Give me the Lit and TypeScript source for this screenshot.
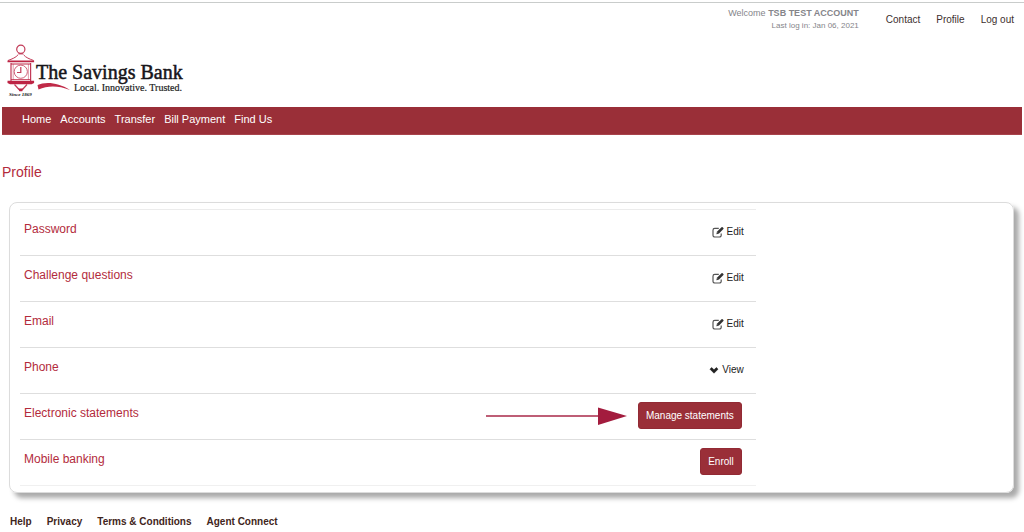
import { LitElement, html, svg, css } from "lit";
import { customElement } from "lit/decorators.js";

type Action = "edit" | "view" | "manage" | "enroll";

interface Setting {
  name: string;
  action: Action;
}

const SETTINGS: Setting[] = [
  { name: "Password", action: "edit" },
  { name: "Challenge questions", action: "edit" },
  { name: "Email", action: "edit" },
  { name: "Phone", action: "view" },
  { name: "Electronic statements", action: "manage" },
  { name: "Mobile banking", action: "enroll" },
];

const NAV = ["Home", "Accounts", "Transfer", "Bill Payment", "Find Us"];
const ACCOUNT_LINKS = ["Contact", "Profile", "Log out"];
const FOOTER_LINKS = ["Help", "Privacy", "Terms & Conditions", "Agent Connect"];

const lantern = svg`
  <g fill="none" stroke="#c23b58">
    <circle cx="14.8" cy="7.2" r="4.1" stroke-width="1.2" />
    <path d="M12.3 11.8h5" stroke-width="1.2" />
    <path d="M12 12.8C10 15.500 6 17 2 18.500M17.600 12.800C19.600 15.500 23.600 17 27.600 18.500" stroke-width="1" />
    <path d="M5 21v18M24.600 21v18" stroke-width="1.2" />
    <path d="M7.200 22v16M22.400 22v16" stroke-width=".8" stroke="#dc8598" />
    <circle cx="14.800" cy="29.700" r="6.600" stroke-width="1" stroke="#cf5f78" />
    <path d="M14.800 25V30.500H11" stroke-width="1.200" />
    <path d="M8.500 42.500 13 47.500M21 42.500 16.500 47.500" stroke-width="1.200" />
  </g>
  <g fill="#bd2444">
    <path d="M1.500 18.400h26.600v1.900h-26.600zM5 21.400h19.600v1H5zM5 37.200h19.600v.9H5zM1.500 38.800h26.600v2.200l-2.500 1.300H4l-2.500-1.300z" />
    <path d="M12.300 46.500h5l-1 2.700h-3z" />
  </g>
`;

@customElement("app-root")
export class AppRoot extends LitElement {
  static styles = css`
    :host {
      display: block;
      font-family: "Liberation Sans", Arial, sans-serif;
      color: #333;
      background: #fff;
      padding: 2px 2px 0;
    }
    * {
      box-sizing: border-box;
    }
    a {
      color: inherit;
      text-decoration: none;
    }
    .top {
      display: flex;
      justify-content: flex-end;
      height: 40px;
      margin: 0 -2px;
      padding: 4px 10px 0 0;
      border-top: 1px solid #c9cccb;
    }
    .welcome {
      text-align: right;
      color: #85858a;
      font-size: 9px;
      line-height: 13px;
    }
    .last {
      font-size: 8px;
      line-height: 12px;
    }
    .account {
      display: flex;
      gap: 16px;
      margin-left: 27px;
      font-size: 10px;
      line-height: 25px;
      color: #40302f;
    }
    .logo {
      display: block;
      width: 184px;
      height: 56px;
      margin: 0 0 9px 4px;
    }
    .brand {
      font: 20px "Liberation Serif", serif;
      fill: #17151a;
      stroke: #17151a;
      stroke-width: 0.5px;
    }
    .tagline {
      font: 10px "Liberation Serif", serif;
      fill: #222;
      stroke: #222;
      stroke-width: 0.2px;
    }
    .since {
      font: italic bold 5px "Liberation Serif", serif;
      fill: #111;
    }
    .nav {
      display: flex;
      gap: 9px;
      height: 28px;
      padding-left: 20px;
      background: #9a2f38;
      border-bottom: 1px solid #a8434b;
      color: #fff;
      font-size: 11px;
      line-height: 24px;
    }
    h1 {
      margin: 29px 0 22px;
      color: #b32b3c;
      font-size: 14px;
      font-weight: normal;
      line-height: 16px;
    }
    .card {
      margin: 0 8px 0 7px;
      padding: 6px 12px 6px 10px;
      border: 1px solid #dcdcdc;
      border-radius: 8px;
      box-shadow: 5px 5px 5px #aaa;
    }
    .list {
      width: 75%;
      margin: 0;
      padding: 0;
      list-style: none;
      border-top: 1px solid #ececec;
    }
    .row {
      display: flex;
      justify-content: space-between;
      align-items: flex-start;
      height: 46px;
      padding: 8px 14px 0 4px;
      border-bottom: 1px solid #dedede;
    }
    .row:last-child {
      border-color: #f0f0f0;
    }
    h2 {
      margin: 0;
      padding-top: 3px;
      color: #b32b3c;
      font-size: 12px;
      font-weight: normal;
      line-height: 16px;
    }
    .actions {
      display: flex;
      align-items: center;
      gap: 11px;
      height: 27px;
    }
    .link {
      display: flex;
      align-items: center;
      gap: 3px;
      margin-right: -2px;
      padding: 0;
      border: 0;
      background: none;
      color: #222;
      font: inherit;
      font-size: 10px;
      line-height: 16px;
    }
    .solid {
      height: 27px;
      padding: 0 7px;
      border: 1px solid #922a34;
      border-radius: 3px;
      background: #9a2f38;
      color: #fff;
      font: inherit;
      font-size: 10px;
    }
    .footer {
      display: flex;
      gap: 15px;
      margin-top: 21px;
      padding-left: 8px;
      color: #3f2520;
      font-size: 10px;
      font-weight: bold;
      line-height: 16px;
    }
  `;

  private action(s: Setting) {
    switch (s.action) {
      case "edit":
        return html`<button class="link" aria-label="Edit ${s.name}">
          <svg width="12" height="12" viewBox="0 0 12 12" fill="none" aria-hidden="true">
            <path d="M6.800 2.400H2.800A1.800 1.800 0 0 0 1 4.200V9.200A1.800 1.800 0 0 0 2.800 11H7.400A1.800 1.800 0 0 0 9.200 9.200V7.600" stroke="#555" stroke-width="1.200" />
            <path d="M4.400 8.200 4.900 5.800 9.500 1.200a.8.8 0 0 1 1.100 0l.8.8a.8.8 0 0 1 0 1.100L6.800 7.700z" fill="#333" />
            <path d="M5.300 6.600 6.100 7.400" stroke="#fff" stroke-width=".6" />
          </svg>Edit</button>`;
      case "view":
        return html`<button class="link" aria-label="View ${s.name}">
          <svg width="10" height="10" viewBox="0 0 10 10" aria-hidden="true">
            <path d="M1 4.200 2.600 2.600 5 4.800 7.400 2.600 9 4.200 5 8.200z" fill="#222" stroke="#222" stroke-width=".6" stroke-linejoin="round" />
          </svg>View</button>`;
      case "manage":
        return html`
          <svg width="141" height="18" viewBox="0 0 141 18" aria-hidden="true">
            <path d="M0 9H114" stroke="#a82848" stroke-width="1.600" />
            <path d="M112 .5 141 9 112 18z" fill="#a31c3e" />
          </svg>
          <button class="solid">Manage statements</button>`;
      case "enroll":
        return html`<button class="solid">Enroll</button>`;
    }
  }

  render() {
    return html`
      <header>
        <div class="top">
          <div class="welcome">
            <div>Welcome <b>TSB TEST ACCOUNT</b></div>
            <div class="last">Last log in: Jan 06, 2021</div>
          </div>
          <nav class="account" aria-label="Account">
            ${ACCOUNT_LINKS.map((t) => html`<a href="#">${t}</a>`)}
          </nav>
        </div>
        <svg class="logo" viewBox="0 0 184 56" role="img" aria-label="The Savings Bank">
          ${lantern}
          <path d="M31.500 43C39 39.500 52 40 64 48 52 43.500 42 43.500 32.500 47.500z" fill="#c02a48" />
          <text class="brand" x="30" y="37">The Savings Bank</text>
          <text class="tagline" x="68" y="49">Local. Innovative. Trusted.</text>
          <text class="since" x="3" y="54">Since 1869</text>
        </svg>
        <nav class="nav" aria-label="Main">
          ${NAV.map((t) => html`<a href="#">${t}</a>`)}
        </nav>
      </header>
      <main>
        <h1>Profile</h1>
        <section class="card">
          <ul class="list">
            ${SETTINGS.map(
              (s) => html`<li class="row">
                <h2>${s.name}</h2>
                <div class="actions">${this.action(s)}</div>
              </li>`
            )}
          </ul>
        </section>
      </main>
      <footer class="footer">
        ${FOOTER_LINKS.map((t) => html`<a href="#">${t}</a>`)}
      </footer>
    `;
  }
}
